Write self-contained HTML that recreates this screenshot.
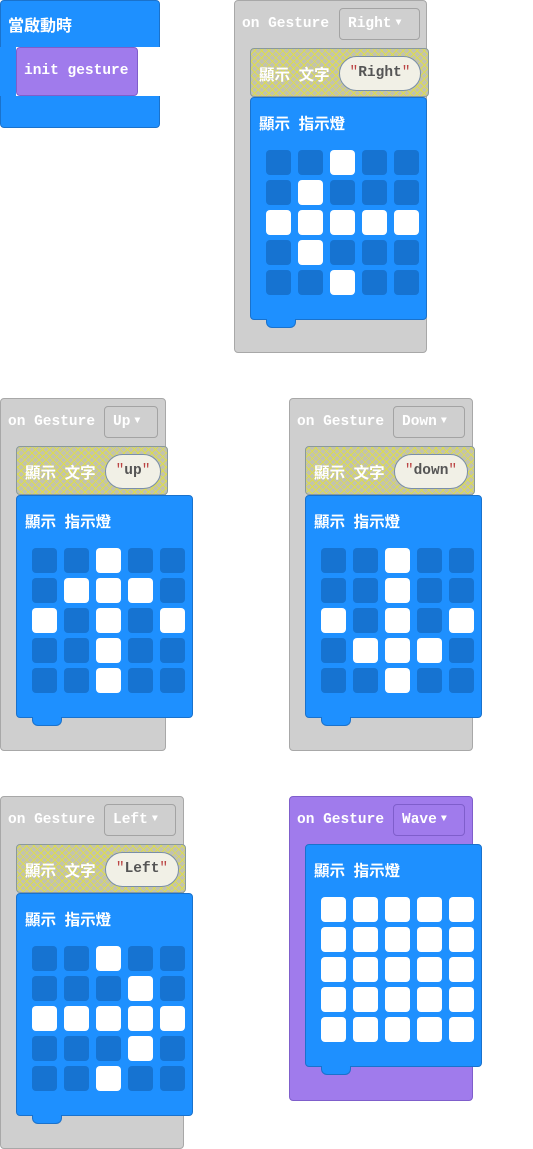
<!DOCTYPE html>
<html><head><meta charset="utf-8"><style>
*{box-sizing:border-box;margin:0;padding:0}
body{width:533px;height:1149px;background:#fff;position:relative;overflow:hidden;font-family:"Liberation Sans","Noto Sans CJK TC",sans-serif}
.a{position:absolute}
.g{position:absolute;background:#cfcfcf;border:1px solid #a8a8a8;border-radius:4px}
.p{background:#a07bec;border-color:#7f5ecb}
.hd{position:absolute;left:7px;top:15px;color:#fff;font:bold 14.5px "Liberation Mono",monospace;white-space:nowrap}
.dd{position:absolute;top:7px;height:32px;border:1px solid #a3a3a3;border-radius:4px;color:#fff;font:bold 14.5px "Liberation Mono",monospace;padding:7px 0 0 8px;white-space:nowrap}
.dd s{text-decoration:none;font-size:10px;vertical-align:2px;margin-left:4px}
.p .dd{border-color:#7f5ecb}
.sh{position:absolute;height:49px;border:1px solid #8a9a9a;border-radius:4px;background-color:#c2c2b0;background-image:repeating-linear-gradient(45deg,transparent 0 4px,#dcdc50 4px 5px),repeating-linear-gradient(-45deg,transparent 0 4px,#dcdc50 4px 5px)}
.t{position:absolute;left:8px;top:14px;color:#fff;font-weight:bold;font-size:15.5px;white-space:pre;font-family:"Liberation Sans","Noto Sans CJK TC",sans-serif}
.pl{position:absolute;left:88px;top:7px;height:35px;border-radius:18px;background:#f1f0e6;border:1px solid #7a8fa8;font:bold 14.5px "Liberation Mono",monospace;color:#555;text-align:center;padding-top:8px;white-space:nowrap}
.pl b{color:#b44;font-weight:normal}
.led{position:absolute;width:177px;height:223px;background:#1e90ff;border:1px solid #1a72cc;border-radius:4px}
.tab{position:absolute;left:15px;bottom:-9px;width:30px;height:9px;background:#1e90ff;border:1px solid #1a72cc;border-top:none;border-radius:0 0 6px 6px}
.gr{position:absolute;left:15px;top:52px;display:grid;grid-template-columns:repeat(5,25px);grid-auto-rows:25px;column-gap:7px;row-gap:5px}
.gr i{display:block;background:#1673d1;border-radius:4px}
.gr i.w{background:#fff}
</style></head><body>

<div class="a" style="left:0;top:0;width:160px;height:128px;background:#1e90ff;border:1px solid #1a72cc;border-radius:4px"></div>
<div class="a" style="left:16px;top:47px;width:145px;height:49px;background:#fff"></div>
<div class="a" style="left:0;top:47px;width:16px;height:49px;background:#1e90ff"></div>
<div class="t a" style="left:8px;top:12px;font-size:16px">當啟動時</div>
<div class="a" style="left:16px;top:47px;width:122px;height:49px;background:#a07bec;border:1px solid #7f5ecb;border-radius:4px"></div>
<div class="a" style="left:24px;top:63px;color:#fff;font:bold 14.5px 'Liberation Mono',monospace">init gesture</div>

<div class="g" style="left:234px;top:0;width:193px;height:353px">
 <div class="hd">on Gesture</div>
 <div class="dd" style="left:104px;width:81px">Right<s>▼</s></div>
 <div class="sh" style="left:15px;top:47px;width:179px"><div class="t">顯示  文字</div><div class="pl" style="width:82px"><b>"</b>Right<b>"</b></div></div>
 <div class="led" style="left:15px;top:96px"><div class="t">顯示  指示燈</div><div class="tab"></div>
  <div class="gr"><i></i><i></i><i class="w"></i><i></i><i></i><i></i><i class="w"></i><i></i><i></i><i></i><i class="w"></i><i class="w"></i><i class="w"></i><i class="w"></i><i class="w"></i><i></i><i class="w"></i><i></i><i></i><i></i><i></i><i></i><i class="w"></i><i></i><i></i></div></div>
</div>

<div class="g" style="left:0;top:398px;width:166px;height:353px">
 <div class="hd">on Gesture</div>
 <div class="dd" style="left:103px;width:54px">Up<s>▼</s></div>
 <div class="sh" style="left:15px;top:47px;width:152px"><div class="t">顯示  文字</div><div class="pl" style="width:56px"><b>"</b>up<b>"</b></div></div>
 <div class="led" style="left:15px;top:96px"><div class="t">顯示  指示燈</div><div class="tab"></div>
  <div class="gr"><i></i><i></i><i class="w"></i><i></i><i></i><i></i><i class="w"></i><i class="w"></i><i class="w"></i><i></i><i class="w"></i><i></i><i class="w"></i><i></i><i class="w"></i><i></i><i></i><i class="w"></i><i></i><i></i><i></i><i></i><i class="w"></i><i></i><i></i></div></div>
</div>

<div class="g" style="left:289px;top:398px;width:184px;height:353px">
 <div class="hd">on Gesture</div>
 <div class="dd" style="left:103px;width:72px">Down<s>▼</s></div>
 <div class="sh" style="left:15px;top:47px;width:170px"><div class="t">顯示  文字</div><div class="pl" style="width:74px"><b>"</b>down<b>"</b></div></div>
 <div class="led" style="left:15px;top:96px"><div class="t">顯示  指示燈</div><div class="tab"></div>
  <div class="gr"><i></i><i></i><i class="w"></i><i></i><i></i><i></i><i></i><i class="w"></i><i></i><i></i><i class="w"></i><i></i><i class="w"></i><i></i><i class="w"></i><i></i><i class="w"></i><i class="w"></i><i class="w"></i><i></i><i></i><i></i><i class="w"></i><i></i><i></i></div></div>
</div>

<div class="g" style="left:0;top:796px;width:184px;height:353px">
 <div class="hd">on Gesture</div>
 <div class="dd" style="left:103px;width:72px">Left<s>▼</s></div>
 <div class="sh" style="left:15px;top:47px;width:170px"><div class="t">顯示  文字</div><div class="pl" style="width:74px"><b>"</b>Left<b>"</b></div></div>
 <div class="led" style="left:15px;top:96px"><div class="t">顯示  指示燈</div><div class="tab"></div>
  <div class="gr"><i></i><i></i><i class="w"></i><i></i><i></i><i></i><i></i><i></i><i class="w"></i><i></i><i class="w"></i><i class="w"></i><i class="w"></i><i class="w"></i><i class="w"></i><i></i><i></i><i></i><i class="w"></i><i></i><i></i><i></i><i class="w"></i><i></i><i></i></div></div>
</div>

<div class="g p" style="left:289px;top:796px;width:184px;height:305px">
 <div class="hd">on Gesture</div>
 <div class="dd" style="left:103px;width:72px">Wave<s>▼</s></div>
 <div class="led" style="left:15px;top:47px"><div class="t">顯示  指示燈</div><div class="tab"></div>
  <div class="gr"><i class="w"></i><i class="w"></i><i class="w"></i><i class="w"></i><i class="w"></i><i class="w"></i><i class="w"></i><i class="w"></i><i class="w"></i><i class="w"></i><i class="w"></i><i class="w"></i><i class="w"></i><i class="w"></i><i class="w"></i><i class="w"></i><i class="w"></i><i class="w"></i><i class="w"></i><i class="w"></i><i class="w"></i><i class="w"></i><i class="w"></i><i class="w"></i><i class="w"></i></div></div>
</div>

</body></html>
